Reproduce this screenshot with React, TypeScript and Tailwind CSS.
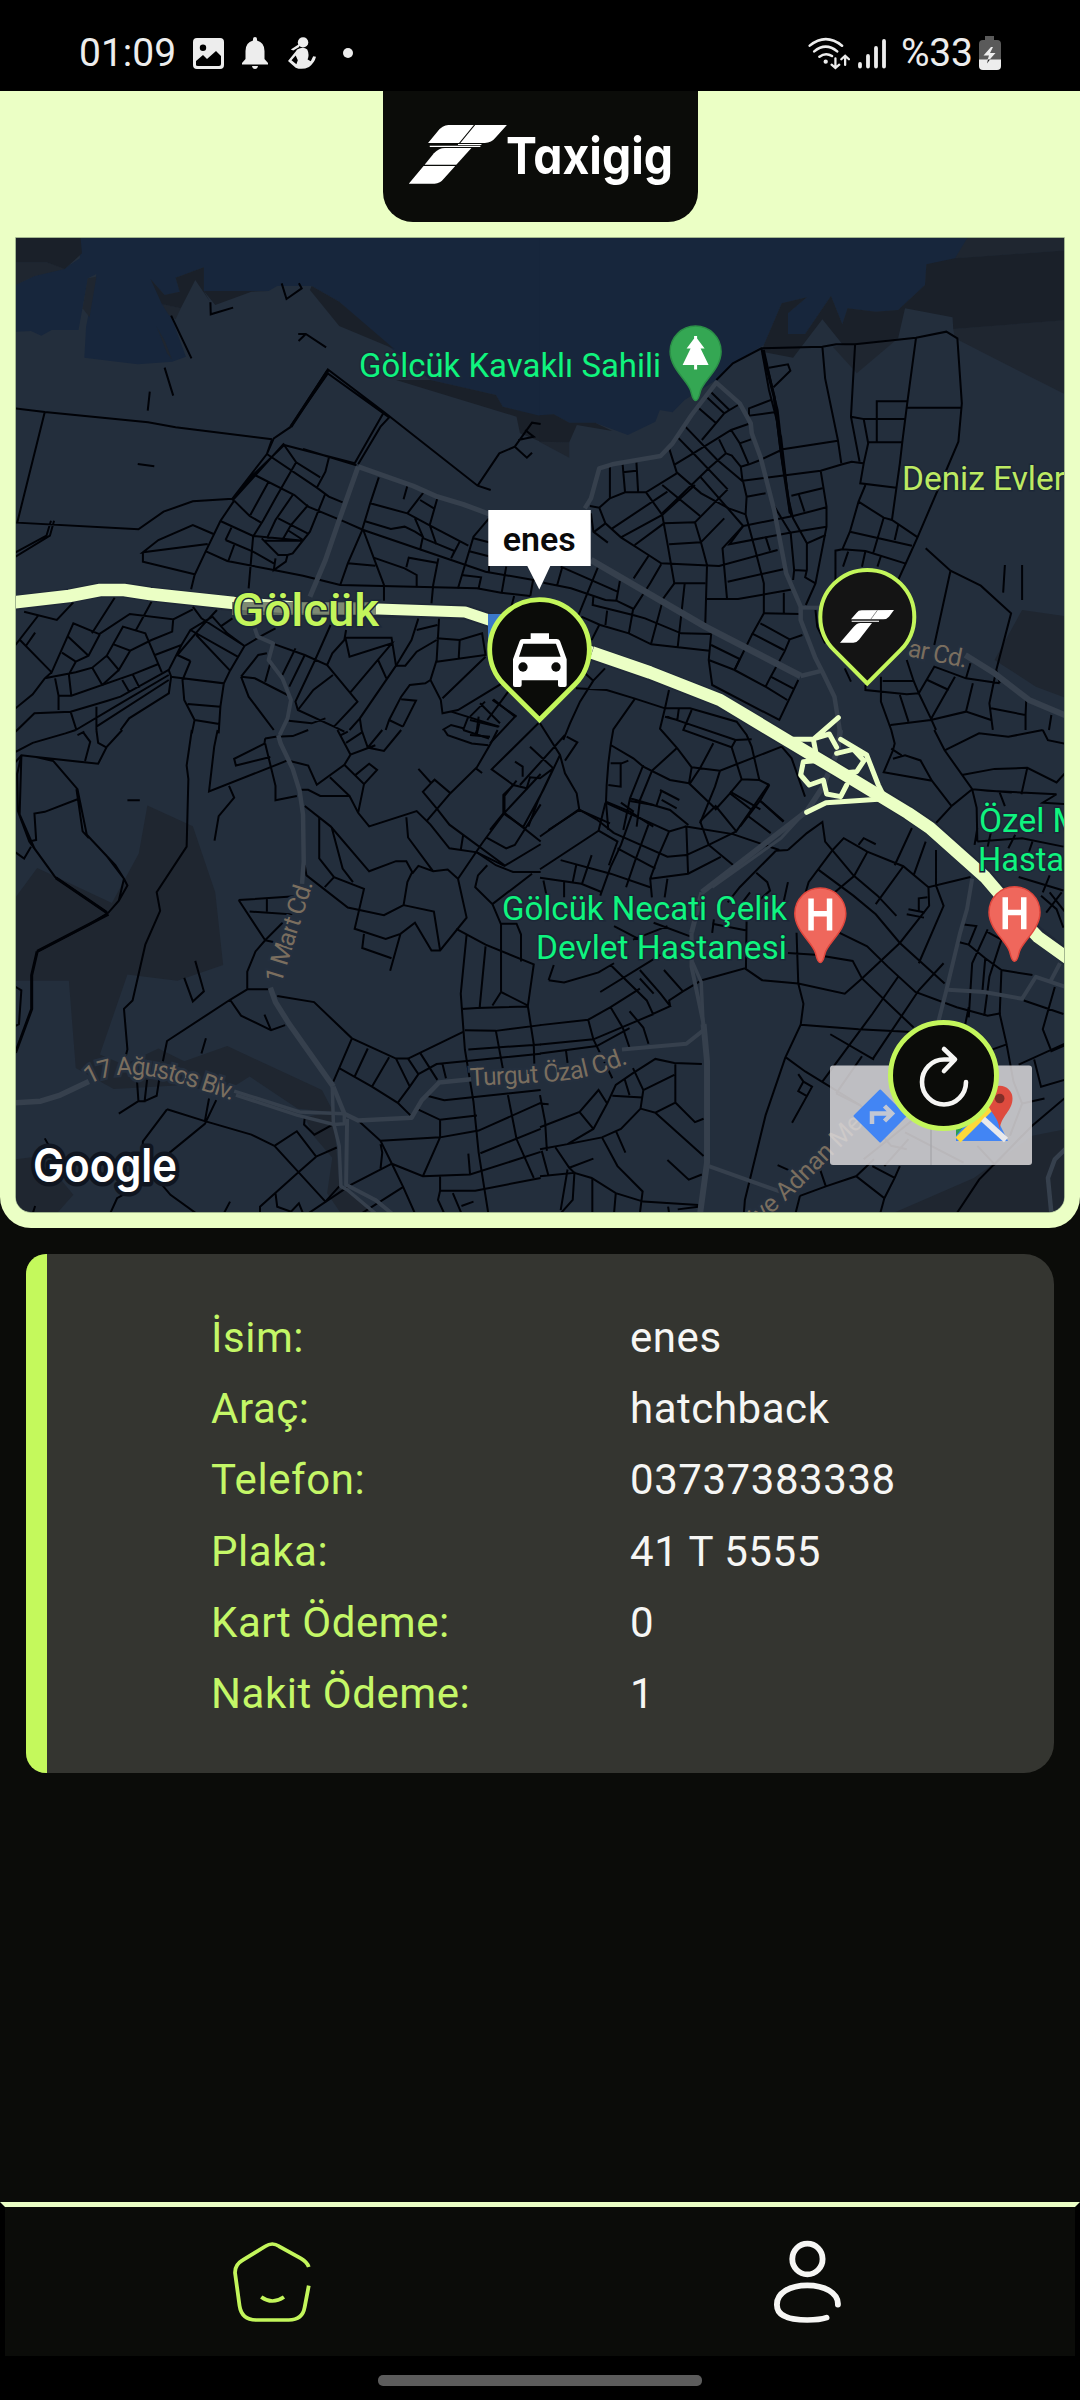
import React from "react";

type Box = "nw" | "ne" | "sw" | "se" | "mid";

// Map tiles: each group of roads is stored in its own tile space.
const TILE: Record<Box, string> = {
  nw: "translate(0 230) scale(0.34436 0.33333)",
  ne: "translate(540 230) scale(0.34436 0.33333)",
  sw: "translate(0 730) scale(0.34436 0.33806)",
  se: "translate(540 730) scale(0.34436 0.33806)",
  mid: "translate(470 490) scale(0.33333)",
};

const WATER: [Box, string][] = [
  ["nw", "M232 0L1570 0L1570 560L1460 530L1440 495L1250 450L1130 350L985 215L905 168L805 168L780 183L592 183L592 112L510 143L522 185L478 195L437 147L497 260L540 380L500 395L400 403L245 383L250 290L280 132L255 145L228 300L150 300L120 317L90 303L45 305L45 165L100 138L188 115L232 85Z"],
  ["ne", "M-2 0L1262 0L1205 90L1122 103L1118 165L1040 240L975 245L893 235L878 283L845 198L770 312L720 312L720 250L775 202L702 220L650 345L560 400L512 450L420 510L385 547L348 540L335 575L255 615L160 578L85 578L40 553L-2 558Z"],
];

const DARK: [Box, string][] = [
  ["nw", "M0 0L232 0L238 70L188 117L135 97L45 97L0 97Z"],
  ["nw", "M437 147L478 195L522 185L510 143L592 112L592 183L610 215L567 150L525 235L470 222Z"],
  ["nw", "M592 183L780 183L730 185L625 225Z"],
  ["nw", "M905 168L985 215L1145 357L985 288L900 180Z"],
  ["nw", "M1250 450L1440 495L1460 530L1570 558L1570 635L1510 610L1500 560L1150 450Z"],
  ["ne", "M1205 85L1570 58L1570 267L1200 297L1198 262L1060 235L1040 325L915 343L880 345L820 268L735 383L645 365L650 345L702 220L775 202L720 250L720 312L770 312L845 198L878 283L893 235L975 245L1040 240L1118 165L1122 103Z"],
  ["ne", "M-2 635L85 637L107 585L210 603L160 578L85 578L40 553L-2 556Z"],
];

const PARK: [Box, string][] = [
  ["nw", "M45 97L135 97L188 117L100 138L45 165Z"],
  ["nw", "M255 145L280 140L260 262L240 235Z"],
  ["nw", "M455 290L480 335L500 390L485 370Z"],
  ["nw", "M470 222L525 235L510 268L490 255Z"],
  ["ne", "M1255 0L1570 0L1570 58L1205 85Z"],
  ["ne", "M1200 297L1570 267L1570 517L1205 325Z"],
  ["ne", "M1400 1140L1570 1165L1570 1420L1440 1370L1320 1290Z"],
  ["ne", "M850 350L1040 325L920 430Z"],
  ["ne", "M-2 635L85 637L85 683Z"],
  ["sw", "M45 495L108 408L325 512L403 365L428 223L560 285L625 480L648 695L515 742L370 723L290 960L360 990L460 942L535 980L660 935L935 1065L968 1130L865 1120L725 1025L640 1080L540 1050L330 1062L220 1000L200 742L45 742Z"],
  ["sw", "M885 1145L968 1130L985 1340L1020 1370L1090 1430L990 1430L950 1370L965 1265L910 1200Z"],
  ["sw", "M45 1270L120 1260L213 1375L165 1430L45 1430Z"],
  ["se", "M1030 1427L1260 1325L1430 1200L1570 1172L1570 1450L1030 1450Z"],
];

const ARTERIAL: [Box, number, string][] = [
  ["nw", 5, "M1040 710L1200 768L1270 800L1345 823L1420 852"],
  ["nw", 5, "M1040 710L985 870L945 990L900 1100"],
  ["nw", 4, "M740 1195L748 1220L793 1240L780 1290L820 1345L845 1410L835 1465L812 1515"],
  ["ne", 4.5, "M130 835L148 805L172 715L210 703L350 678L385 640L440 555L512 458L580 520L612 580L615 610L640 680L680 840L715 1030L757 1130L757 1170L800 1285L820 1325L855 1400L872 1510"],
  ["ne", 4, "M757 1133L815 1133"],
  ["ne", 6.5, "M148 990L480 1190L757 1338"],
  ["ne", 4.5, "M757 1338L820 1322"],
  ["ne", 6, "M1235 1275L1320 1330L1420 1410L1570 1475"],
  ["sw", 4.5, "M808 15L815 40L850 115L870 180L880 250L882 390L877 455"],
  ["sw", 5.5, "M785 762L800 805L840 870L968 1055"],
  ["sw", 4.5, "M968 1055L1000 1135L1040 1155L1195 1147L1225 1095L1275 1043L1368 1033"],
  ["sw", 5.5, "M45 1103L118 1098L175 1080L258 1040"],
  ["sw", 3.5, "M680 1068L870 1130L1000 1135"],
  ["sw", 3.5, "M685 1080L865 1140L970 1167L1000 1165L1000 1135"],
  ["sw", 3.5, "M965 1055L968 1160L985 1230L990 1350L1008 1360L1090 1430"],
  ["sw", 4, "M1008 1150L1005 1345L1090 1390L1138 1430"],
  ["se", 5.5, "M470 480L775 240L820 170L865 60L872 0"],
  ["se", 3, "M500 465L700 320L790 220"],
  ["se", 5, "M440 600L450 560L470 480"],
  ["se", 6, "M475 870L485 980L485 1280L465 1430"],
  ["se", 4, "M440 600L440 700L475 870"],
  ["se", 3.5, "M440 600L440 680L468 745L475 900"],
  ["se", 4, "M238 945L425 928L475 888"],
  ["se", 4, "M490 1290L710 1370"],
  ["se", 4, "M1255 440L1240 530L1220 600L1180 770L1155 870"],
  ["se", 4, "M1185 768L1290 775L1400 795L1440 730L1570 775M1480 748L1510 690"],
  ["se", 4.5, "M1570 1195L1495 1270L1475 1325L1485 1430"],
];

const STREETS: [Box, string][] = [
  ["nw", "M45 535L130 546L430 577L510 592L790 628M130 546L50 878L402 898L475 845L560 814L675 806L735 735L825 645M45 967L135 917L148 872M45 980L145 917L157 872M675 806L775 672L795 625L845 590L952 418L1115 546L1387 767L1425 780M790 628L775 672M840 595L952 430L1130 562L1105 590L1040 703M1115 546L1030 700L825 645M880 657L1035 706M1387 767L1450 670L1495 650L1545 578L1570 582M1495 650L1530 683L1545 668M1525 600L1550 620L1505 630M675 812L825 640"],
  ["nw", "M497 257L556 385M478 413L503 497M435 485L429 542M400 702L448 709M611 217L612 253L677 233M818 160L832 207L876 175L868 160M866 312L888 312L947 352M888 312L867 333"],
  ["nw", "M825 645L860 697L930 742M860 697L800 805L765 870L735 920L722 1075M955 683L945 725L920 773M775 672L920 773L955 800L995 817M740 735L855 795L895 830L1000 875L1055 900L1225 960L1410 1025L1570 1054M780 755L727 855M850 795L800 870L775 925M895 825L845 885L820 930M945 790L900 905L850 970L835 975M680 812L725 858L757 877M640 873L735 918L880 932M808 865L893 910M835 900L880 930M760 925L808 975L835 975L830 995L795 1020L800 985M765 932L875 932M600 965L660 993L795 1020L880 1037L988 1065L1385 1075L1455 1088L1540 1098M680 812L640 873L597 965L565 1035L555 1078M620 912L560 885L460 930L415 967L603 942M415 967L415 995L565 1033M672 893L655 930M680 945L663 993M655 930L735 965L795 1000"],
  ["nw", "M1100 742L1075 820L1050 905L1010 1000L988 1065M1183 767L1172 808M1230 787L1183 850M1270 805L1248 885L1267 943M1075 820L1183 850L1245 885L1360 947M1220 810L1260 835M1058 873L1135 897L1175 890L1205 905L1228 920L1220 960M1205 865L1230 925L1320 963L1310 985M1055 900L1085 983L1115 1065L1115 1112M1010 1000L1090 1007M1085 983L1175 1015L1210 1035L1210 1070M1180 1012L1187 983L1268 998M1273 985L1258 1065L1253 1120M1335 935L1310 985M1420 865L1375 920L1330 1075M1375 925L1425 938M1360 963L1425 980M1340 1035L1397 1042L1390 1075M1420 980L1420 1025M1470 1010L1457 1088M1548 1050L1540 1098M1493 1098L1480 1150"],
  ["nw", "M70 1145L165 1170L213 1117M110 1158L45 1245M58 1230L150 1327L213 1180L290 1213M102 1208L75 1248M333 1103L267 1210M440 1115L395 1200M195 1217L257 1277M287 1213L377 1152L503 1168L500 1205L440 1230L378 1262L330 1243M180 1268L220 1295L257 1277L290 1213M150 1327L130 1345L95 1393L45 1435M130 1345L220 1327L268 1313L310 1277L357 1190L422 1210L470 1327M220 1295L200 1333L207 1397M268 1313L297 1365M310 1277L345 1320L378 1262M345 1320L297 1365M503 1168L560 1138M560 1130L585 1165L710 1248M630 1140L585 1190L515 1275M617 1160L660 1210L710 1248M675 1165L640 1190M450 1275L527 1245L553 1200L617 1160M553 1200L690 1280M570 1215L668 1322M515 1275L553 1293M527 1245L490 1320L497 1340L490 1392M710 1248L668 1322L650 1360L495 1340M553 1293L530 1350L535 1410L565 1470L557 1510M650 1360L640 1430L635 1510M545 1422L640 1430M565 1470L637 1482M710 1248L755 1220L800 1195"],
  ["nw", "M160 1345L170 1397L207 1397L385 1333L460 1302M170 1397L170 1440M45 1505L100 1450L205 1445L310 1413L350 1400L490 1320M355 1350L375 1385M385 1333L405 1373M205 1445L222 1500M280 1430L280 1500M220 1500L350 1420L490 1335M280 1490L490 1350M350 1500L375 1465L490 1390M700 1340L750 1275L775 1270M700 1340L722 1400L795 1500M700 1340L740 1345L835 1395M785 1300L770 1355M858 1255L820 1335M885 1275L840 1370M790 1240L885 1275L950 1305L1038 1415L970 1490M960 1185L915 1290L858 1415L865 1440L970 1490L1000 1505M967 1335L910 1380L865 1440M1005 1200L1000 1230L965 1270L950 1305M1003 1223L1137 1223L1150 1307L1177 1307L1210 1265L1268 1230M1003 1223L1015 1280L1138 1240L1015 1390M1098 1290L1122 1345M838 1472L905 1480L945 1465"],
  ["nw", "M1215 1165L1195 1230L1150 1307L1045 1465L1050 1500M1045 1465L1015 1500M1210 1200L1270 1185M1275 1165L1268 1290L1250 1350L1280 1410L1285 1450L1330 1440L1490 1340M1268 1225L1335 1230L1400 1210L1410 1275L1268 1295M1335 1230L1332 1285M1410 1280L1285 1405M1250 1350L1235 1360L1190 1365L1165 1400L1130 1470L1120 1500M1165 1408L1208 1412L1170 1490M1130 1470L1170 1490M1310 1445L1450 1490M1360 1460L1345 1500M1390 1460L1385 1500M1430 1410L1500 1460M1490 1365L1415 1470M1285 1500L1310 1485L1345 1495"],
  ["ne", "M512 450L560 400L643 355L820 350L860 343L915 343L1092 323L1180 305L1212 325L1225 520L1215 635L1180 720L1095 925L1060 1005L1040 1050M643 355L665 480L700 620L720 800L735 865L775 940L775 1020L770 1042L800 1060M646 360L690 540L712 740L726 850M650 360L680 500L698 660L730 860M665 413L720 403L727 422L678 472M675 508L607 535L607 557L680 547M820 350L828 445L865 630L875 700M865 632L705 658L640 690L607 703M915 343L903 560L928 695M903 560L940 567L953 640L940 700L930 760L1035 773M940 567L1060 567M978 635L978 514L1065 514M953 637L1052 637M1092 323L1067 515L1052 637L1045 700L1022 870M1067 533L1225 533"],
  ["ne", "M497 487L550 540L575 525M483 500L535 550L470 630M458 532L510 578M535 550L550 540M422 590L515 690L590 755M400 622L450 675L545 778M375 655L397 727L468 790L548 835L597 853M605 582L555 600L445 670L392 703M540 670L490 715L405 800L355 850M555 600L580 640L605 700M580 640L613 628M520 628L540 670L557 677L583 710L588 752M583 710L607 703M588 752L815 722L878 703L905 695L938 700M600 800L655 790M545 778L450 877M590 755L600 800L597 853L625 960L650 1060L650 1150L615 1215L565 1320M815 722L832 830L832 890L800 1060L772 1125M730 797L820 775M752 795L768 845M832 832L735 858L590 888M678 825L728 910L738 1020L735 1050M832 890L725 908L550 943L590 888M775 940L830 915M738 1020L775 1022"],
  ["ne", "M203 708L203 805L172 833L145 828M240 703L247 787M280 697L285 787M203 805L247 787L308 787L397 730M240 727L280 722M308 787L355 855L370 940L390 1060L480 1060M172 833L190 880L235 922L315 975L352 1000L520 1008L690 960M148 850L155 905L197 938M158 905L190 880M210 895L370 785M235 922L355 855L450 765M275 945L360 880L450 877L467 935L485 1005L480 1180M375 943L467 937L535 865M355 765L465 858M465 740L590 888M590 888L530 955L543 1105M545 1055L710 1017M480 1107L575 1107L735 1078M708 1088L708 1150M650 1150L755 1152M655 920L668 962"],
  ["ne", "M315 978L272 1045M352 1003L320 1060L270 1140L258 1210M390 1060L358 1105L323 1240M420 1062L400 1250M168 1012L110 1160M232 1053L222 1110M60 1010L225 1085M65 1010L50 1065M10 1058L90 1075L190 1110L222 1112L272 1137M155 1100L153 1125L270 1155L305 1165L410 1210L497 1212L490 1290L500 1365L695 1470L750 1350M195 1142L190 1185M120 1160L175 1185L258 1210L323 1243L492 1262M172 1185L150 1230M497 1245L580 1287L565 1320L490 1290M565 1320L655 1370L670 1340L710 1265L725 1228L640 1180M615 1210L708 1260M725 1228L762 1215M670 1340L740 1378M655 1370L718 1410"],
  ["ne", "M945 765L925 815L900 905L878 958M925 815L998 863L1022 870L1097 922M998 863L968 968M1040 885L1030 930M900 905L1080 947M858 1060L858 962L878 958L945 963L1060 1000M895 965L880 1010M945 963L935 1010M990 978L980 1010M1120 955L1192 1022L1280 1067L1368 1150L1325 1320L1305 1420L1315 1500M1192 1022L1145 1245M1350 1005L1345 1088M1400 1005L1400 1110M800 1140L805 1190L828 1240M885 1315L903 1355M945 1365L945 1380L1065 1393L1100 1390L1135 1465L1150 1500M1065 1290L1085 1353L1100 1390L1145 1310L1237 1345L1335 1360M990 1340L990 1415L1020 1500M995 1353L1085 1353M1045 1395L1070 1475M1018 1485L1135 1470L1237 1445L1310 1470M1205 1340L1135 1468M1257 1360L1237 1445M1125 1350L1187 1380M1250 1300L1237 1345M1310 1435L1410 1455L1410 1500M1410 1455L1412 1410M1485 1455L1478 1500M1325 1320L1335 1360"],
  ["mid", "M318 595L410 600L495 626L585 655L660 655L800 695L830 735L845 770L868 870L898 885M405 535L370 572L330 635L300 700L280 750M345 550L370 572M495 626L430 718L422 765L415 820L410 885L408 935L415 1020M597 600L585 655L570 716L622 775L665 832L657 880L735 955M627 652L622 690L585 680M665 660L640 720L785 772L815 868L868 870M935 770L965 805L1005 920M785 772L797 750L845 748M590 680L797 750M422 765L490 805L520 830L600 870L657 880M422 820L455 820L475 812M452 820L452 890L415 885M545 843L620 775M730 760L690 835L660 880M665 832L750 842L935 770M750 842L735 890L690 1000M520 825L480 925L460 1020M545 845L510 930L500 1010M408 935L480 965L550 1010M480 925L600 960L655 1005M575 900L560 945M570 900L628 930M575 930L620 955M815 868L780 910L845 960M780 910L735 960M898 885L870 932L940 995M870 932L810 1010"],
  ["mid", "M210 700L270 795L285 850L320 910L328 960L420 1000M205 700L65 838L130 885L170 895L180 862L210 865L250 835L180 770M150 885L285 735M250 835L205 930L175 1010M270 795L220 900L160 1010M135 815L158 830L158 860M290 740L322 757L285 812M130 885L100 915L100 970L165 1015M100 970L60 1020M328 960L235 1020M70 628L135 680L60 760M30 640L90 700M0 680L45 635M0 735L60 740M30 690L20 735M0 690L85 710"],
  ["sw", "M45 65L95 38L190 10L220 0M45 95L62 75L105 80L285 100L310 50L355 0M225 15L245 5M240 5L262 35L247 92M280 0L285 38L310 52M62 75L50 130L52 240L85 330L160 435L310 540M62 78L57 250L100 350L162 437M105 80L155 92L225 175L252 310L335 400L360 440L370 460L345 505M225 205L130 242L100 247L105 325L85 330M90 345L70 380L45 362M222 175L240 300L258 320M308 370L360 440L345 505L315 540L260 575L108 655M45 760L62 770L55 870L45 875M370 208L406 208M557 0L542 105L547 145L542 345L455 480L465 535L422 635L385 800L360 825L370 945L365 965"],
  ["sw", "M632 0L622 50L607 182L835 90M665 165L680 200L635 255L623 327M770 25L768 40L680 85L685 105L785 80M770 25L800 20L850 18L895 0M770 40L800 165L800 208L862 195M835 90L895 105L920 162L1000 103L1018 73L1090 45M980 0L1018 73M990 15L1010 5M1005 38L1050 8M1050 0L1068 52L1115 62L1165 0M1068 52L1110 0M875 177L895 177L930 195L1015 195L1040 245L1072 285L1210 240L1250 280L1305 350L1385 362L1465 402L1570 338M958 140L1015 195M1000 103L1057 160L1040 245M1030 135L1072 100L1095 118L1057 160M885 225L960 285L1072 418L1150 388L1180 388L1197 420L1183 450L1172 518L1115 548L1010 525L890 430L885 400M927 258L927 380L970 435L1057 470L1030 588L1120 618L1163 603L1205 570L1253 652L1278 652L1355 555L1330 440L1300 413L1258 418L1215 402L1197 425M963 288L995 410L1025 450M970 435L943 465M1180 258L1185 318L1258 418M1172 518L1260 537L1278 652M1057 603L1052 645L1137 675M1163 603L1133 712"],
  ["sw", "M1215 115L1252 157L1228 183L1268 232L1305 280L1465 400M1252 157L1262 147L1308 187L1240 268M1308 187L1385 110L1425 40L1445 0M1290 0L1300 15L1370 40L1418 45M1345 0L1420 25M1385 0L1380 15M1380 112L1400 127M1345 310L1338 355M1330 440L1400 335L1465 245L1570 130M1465 245L1465 195L1500 150M1465 245L1570 330M1413 318L1470 350L1495 340L1570 220M1385 362L1440 400L1490 420L1570 420M1415 400L1388 430L1380 465L1430 515L1545 425M1430 515L1455 575L1455 775L1430 815M1455 573L1500 573L1513 605L1513 685M1325 588L1410 635L1550 693L1533 815L1455 775M1355 605L1338 780L1350 945L1375 1100L1390 1250L1418 1430M1410 640L1393 820M1340 825L1385 822L1533 818L1550 930L1552 1000M1350 888L1440 890L1570 873M1440 890L1460 1000M1360 945L1570 930M1185 972L1345 893"],
  ["sw", "M693 503L857 492M693 503L770 622L845 545L725 537M775 500L775 537M770 622L797 628M770 622L742 655L718 715L718 767L785 767M718 767L668 798L485 920L473 980M668 798L700 845L787 888L828 873M768 842L787 888M805 787L912 805L1022 912L1150 972L1185 972M1022 912L985 1000L968 1040M985 1000L1080 1055L1155 1103L1192 1140M1068 942L1030 1025M1130 968L1080 1055M1150 972L1190 1055L1155 1103M1185 972L1215 1018L1190 1055M1220 955L1270 1035M1215 1018L1268 988L1570 958M1285 988L1295 1030M1240 1082L1290 1095L1570 1065M1215 1123L1278 1153L1385 1140M1278 1153L1278 1205L1228 1320M1105 1215L1278 1205L1390 1185L1570 1103M1395 1252L1570 1180M1138 1283L1228 1320L1365 1315L1570 1248M1475 1080L1500 1210L1550 1325M1278 1320L1278 1363L1380 1363L1570 1325M1278 1363L1272 1390L1290 1430M1315 1370L1340 1430M1340 1408L1375 1395M1360 1253L1365 1315M1040 1155L1105 1215L1138 1283L1170 1350L1205 1430M1105 1225L1110 1250L1105 1298M1138 1283L1020 1345L895 1430M1170 1352L1050 1430"],
  ["sw", "M885 1145L883 1167L913 1197L970 1165M797 1230L862 1187L918 1262L978 1235M918 1262L865 1310L755 1410L755 1430M797 1230L945 1395L985 1350M800 1370L805 1410L845 1425L868 1400L880 1430M398 1040L402 1098L420 1098L427 1035M402 1098L345 1135M420 1098L455 1082L462 1035M485 1122L595 1157L730 1197L797 1230M485 1122L415 1217L412 1270M595 1157L607 1090M628 1095L595 1165L475 1265M470 1345L495 1375L570 1430M375 1365L340 1385L320 1430M668 1395L650 1430M535 733L560 803L592 773L567 683M598 912L585 957M130 1208L148 1240M102 1408L95 1430"],
  ["se", "M0 315L113 235L165 265L215 305M170 298L0 412M190 215L170 298M420 285L560 308L695 355M262 210L330 222M552 182L640 235M465 270L510 225L570 300L665 160M640 210L708 270M605 255L670 305M465 270L490 340L565 403M425 285L430 425M490 340L425 370M215 305L370 375L425 370M235 215L270 240L235 340L205 405L175 490M315 280L275 390L250 465M375 300L345 370L320 440L325 495M190 215L375 300M60 385L205 425L320 465M150 370L122 455M225 350L335 410M105 400L95 450M0 437L120 455L180 480M10 445L20 495M70 450L70 495M170 298L225 330L200 400M370 440L362 495M320 440L430 425L525 375M425 285L375 300M570 300L490 340"],
  ["se", "M720 355L775 305L820 272L828 330L910 430L980 490L1035 550M685 357L720 355M685 357L580 465L545 510M628 422L660 450L668 475L640 500M610 480L580 520M505 560L500 600M600 560L598 705M500 573L600 593M720 450L705 520M770 485L780 450L850 355L882 320L950 360L1055 403L1128 465L1250 435M808 413L910 490L975 545L1045 630L1175 750M950 362L912 432L850 485M925 340L940 320L975 338M1055 403L975 515M1080 290L1030 400M1120 330L1085 430M1150 355L1150 460L1172 520L1100 690M1128 465L1130 520L1045 630L935 735L885 780L750 750L645 740L595 705L470 740M1065 545L1115 555M1100 535L1100 498L1125 495M1070 530L1118 540M870 600L950 640L1010 700L1090 775L1210 820L1300 845L1338 838M745 600L750 750L765 810L757 872L712 970L655 1140L595 1390L592 1430M720 660L800 665L908 683L935 735L1085 880M757 872L925 885L1080 893M1040 730L965 840L820 1040M1172 690L1100 770L965 975M843 900L970 975M712 967L770 1010L930 1110M935 965L860 1075M750 1018L765 1040L750 1068L775 1083L790 1055L765 1040M775 1083L732 1162"],
  ["se", "M1020 0L1030 40L1025 60L998 125L1138 150L1195 225L1255 175L1370 185M1025 85L1060 75L1105 90L1138 150M1020 55L1050 75M1145 0L1175 60L1255 175L1300 180L1500 190M1195 225L1150 275M1175 60L1275 10L1360 20L1460 0M1225 133L1320 115L1415 112L1500 155L1540 110M1415 112L1398 190M1500 190L1460 215L1570 222M1255 175L1268 230L1270 330M1335 185L1350 225M1460 0L1475 30L1570 50M1262 340L1270 290M1300 345L1310 300M1360 350L1380 310M1430 330L1420 360M1270 330L1400 320L1520 345M1390 435L1520 475M1480 430L1460 480M1455 490L1500 530L1520 585M1515 480L1470 540M1480 480L1530 545"],
  ["se", "M1230 575L1267 580L1245 635L1218 628M1295 595L1340 620M1245 635L1293 675L1340 710L1430 725M1300 590L1255 690L1245 850M1293 675L1285 770M1340 620L1305 730L1290 845M1340 710L1335 840L1355 930L1300 950M1245 820L1235 870M1405 800L1520 840M1495 760L1460 885L1485 950L1530 930M1435 975L1455 1055L1540 1030M1355 930L1375 1040L1400 1105L1465 1090M1390 990L1530 925M1540 1075L1430 1170L1275 1330L1210 1430M1400 1105L1365 1200M690 1287L740 1310M810 1290L830 1350M755 1378L830 1350L918 1320L1000 1385L988 1430M755 1378L742 1430M918 1320L970 1270M1045 1290L1030 1325L1000 1385M965 1290L1030 1325M860 1075L930 1110L1000 1180M940 1270L1050 1180L1160 1090M985 1190L1020 1230L1065 1240M1060 1190L1230 1280M1070 1210L1000 1290M1270 1230L1320 1285L1400 1200"],
  ["se", "M0 873L140 857L205 820L290 765M140 857L155 915M0 930L155 915L330 840M0 957L165 935L260 882M205 820L240 880L260 940M260 832L300 880L315 928M205 695L310 800L328 840L378 817L350 780L290 710M378 817L375 800L415 773L470 740M175 775L350 665M25 740L70 747L170 717L215 690M25 740L40 695M290 735L330 780M360 710L415 773M270 620L370 580M215 580L290 620M330 570L440 612M75 945L80 985M155 915L210 1030M0 1175L115 1130L170 1065L195 1105L155 1180L80 1225M115 1130L155 1180M195 1105L220 1050L270 1015L335 973L390 985L470 988M245 1030L260 1080M210 1082L297 1087M270 1000L300 1065L292 1120L335 1132L393 1102L393 988M300 1065L390 1020M292 1120L235 1180L180 1205L80 1225L0 1240M335 1132L475 1260M393 1102L450 1160L475 1150M220 1185L248 1250M180 1205L225 1290L298 1365L290 1430M45 1235L85 1295L100 1310L150 1325L220 1370L300 1395L460 1405M85 1295L155 1268M0 1320L100 1310L95 1390L60 1430M80 1300L60 1420M152 1325L152 1430M220 1370L215 1430M370 1272L432 1330L470 1315M5 1245L25 1320M0 1105L25 1107M0 1080L15 1160L20 1245M372 1410L375 1430M400 1418L460 1410"],
];

const THICK: [Box, string][] = [
  ["sw", "M108 655L92 725L92 825L45 955M162 437L310 540M108 655L315 545"],
  ["ne", "M648 370L680 500L705 700L727 850"],
  ["nw", "M845 590L952 422"],
];

const RAMPS =
  "M970 748L1030 748L1105 683M1030 748L1040 800M1035 745L1078 732L1100 772M1112 748L1190 795L1225 885L1240 915M1100 790L1150 778L1182 812L1160 845L1125 848M1035 812L1000 815L992 855L1018 885L1060 870L1070 912L1112 920L1130 885M1010 967L1068 938L1225 928";

function Areas({ list, fill }: { list: [Box, string][]; fill: string }) {
  return (
    <>
      {list.map(([t, d], i) => (
        <path key={i} d={d} transform={TILE[t]} fill={fill} />
      ))}
    </>
  );
}

function Lines({ list, color, width }: { list: [Box, string][]; color: string; width: number }) {
  return (
    <>
      {list.map(([t, d], i) => (
        <path key={i} d={d} transform={TILE[t]} fill="none" stroke={color} strokeWidth={width} vectorEffect="non-scaling-stroke" />
      ))}
    </>
  );
}

function Drop({ x, y, fill, edge, children }: { x: number; y: number; fill: string; edge: string; children?: React.ReactNode }) {
  return (
    <g transform={`translate(${x} ${y})`}>
      <path
        d="M0 49C-3 49 -3.5 44 -5 39C-8 29 -25.5 17 -25.5 0A25.5 25.5 0 1 1 25.5 0C25.5 17 8 29 5 39C3.500 44 3 49 0 49Z"
        fill={fill}
        stroke={edge}
        strokeWidth="1.5"
      />
      {children}
    </g>
  );
}

const H = "M-12 -15H-6.500V-2.500H6.500V-15H12V17H6.500V3H-6.500V17H-12Z";

function MapLabel(p: { x: number; y: number; w?: number; children: string; size?: number; color?: string; weight?: number; end?: boolean }) {
  return (
    <text
      x={p.x}
      y={p.y}
      textLength={p.w}
      lengthAdjust="spacingAndGlyphs"
      fontSize={p.size ?? 33.5}
      fontWeight={p.weight ?? 400}
      fill={p.color ?? "#0ff47f"}
      textAnchor={p.end ? "end" : "start"}
      stroke="#1c2737"
      strokeWidth="3"
      paintOrder="stroke"
    >
      {p.children}
    </text>
  );
}

function StreetName({ id, d, w, children }: { id: string; d: string; w: number; children: string }) {
  return (
    <>
      <path id={id} d={d} fill="none" />
      <text fontSize="25" fill="#7a6e5f" stroke="#242f3e" strokeWidth="5" paintOrder="stroke">
        <textPath href={`#${id}`} textLength={w}>
          {children}
        </textPath>
      </text>
    </>
  );
}

function CityMap() {
  return (
    <svg className="block h-full w-full" viewBox="16 238 1048 974" preserveAspectRatio="none" fontFamily="Roboto, sans-serif">
      <rect x="0" y="230" width="1080" height="1000" fill="#232e3c" />
      <Areas list={WATER} fill="#17263c" />
      <Areas list={PARK} fill="#1f2630" />
      <Areas list={DARK} fill="#1a2029" />
      <Lines list={STREETS} color="#000207" width={2} />
      <Lines list={THICK} color="#000207" width={3} />
      {ARTERIAL.map(([t, w, d], i) => (
        <path key={i} d={d} transform={TILE[t]} fill="none" stroke="#36404d" strokeWidth={w} strokeLinejoin="round" vectorEffect="non-scaling-stroke" />
      ))}
      <g fill="none" stroke="#ebffc5" strokeLinejoin="round">
        <g stroke="#1c2533" opacity="0.6">
          <path d="M0 605L69 596L100 590L124 590L150 594L234 604L330 609L465 612L489 620L592 653L650 673L720 700L790 742L837 770L880 795L930 827L985 876L1030 928L1080 968" strokeWidth="15" />
        </g>
        <path d="M0 604L69 596L100 590L124 590L150 594L234 603L300 608" strokeWidth="12.500" />
        <path d="M300 608L378 609L465 612L492 621L540 635L592 652" strokeWidth="11" />
        <path d="M592 652.500L650 672.500L720 700L790 742L837 770L880 796L908 813L930 828L985 877L1020 918L1038 937L1080 967" strokeWidth="12.500" />
        <path d={RAMPS} transform={TILE.mid} strokeWidth="5" strokeLinecap="round" vectorEffect="non-scaling-stroke" />
      </g>
      <rect x="232" y="602" width="144" height="13" fill="#6b7664" opacity="0.85" />

      <MapLabel x={232} y={625.5} w={147} size={47} weight={500} color="#c3f65b">Gölcük</MapLabel>
      <MapLabel x={359} y={377} w={302}>Gölcük Kavaklı Sahili</MapLabel>
      <MapLabel x={902} y={490} w={163} color="#bdea62">Deniz Evler</MapLabel>
      <MapLabel x={979} y={832}>Özel M</MapLabel>
      <MapLabel x={978} y={871} w={86}>Hasta</MapLabel>
      <MapLabel x={787} y={919.5} w={285} end>Gölcük Necati Çelik</MapLabel>
      <MapLabel x={787} y={958.5} w={251} end>Devlet Hastanesi</MapLabel>

      <StreetName id="st1" d="M89 1085Q120 1065 178 1083Q210 1092 250 1107" w={149}>17 Ağustos Blv.</StreetName>
      <StreetName id="st2" d="M470 1086Q530 1083 560 1081Q600 1077 645 1056" w={161}>Turgut Özal Cd.</StreetName>
      <StreetName id="st3" d="M281 984Q298 930 321 858" w={106}>1 Mart Cd.</StreetName>
      <StreetName id="st4" d="M907 656L982 671" w={60}>ar Cd.</StreetName>
      <StreetName id="st5" d="M758 1226L800 1188L900 1088" w={147}>iye Adnan Me</StreetName>

      <Drop x={695.6} y={351.5} fill="#34a753" edge="#2b8f47">
        <path d="M-1.5 -15.500H1.5V-13L9 -3H5L13 13.500H1.5V18H-1.5V13.500H-13L-5 -3H-9L-1.5 -13Z" fill="#fff" />
      </Drop>
      <Drop x={820.3} y={913.5} fill="#ef675c" edge="#e0473d">
        <path d={H} fill="#fff" />
      </Drop>
      <Drop x={1014.5} y={912.3} fill="#ef675c" edge="#e0473d">
        <path d={H} fill="#fff" />
      </Drop>

      <rect x="488" y="614" width="16" height="26" fill="#3b78c8" />
      <g transform="translate(539.5 649.300)">
        <path d="M0 70.500L-35.500 35A49.800 49.800 0 1 1 35.500 35Z" fill="#0b0c09" stroke="#c3f65b" strokeWidth="4.800" />
      </g>
      <g transform={TILE.mid}>
        <path
          d="M182 430H237V447H260Q267 447 270 453L290 508V585Q290 591 284 591H270Q264 591 264 585V571H155V585Q155 591 149 591H135Q129 591 129 585V508L149 453Q151 447 158 447H182ZM160 461L147 500H272L258 461Z"
          fill="#fff"
          fillRule="evenodd"
        />
        <circle cx="159" cy="531" r="14" fill="#0b0c09" />
        <circle cx="258" cy="531" r="14" fill="#0b0c09" />
      </g>
      <g transform="translate(867.300 617)">
        <path d="M0 66.500L-33.200 33.200A47 47 0 1 1 33.200 33.200Z" fill="#141414" stroke="#c3f65b" strokeWidth="4" />
      </g>
      <g transform={TILE.mid} fill="#fff">
        <path d="M1143 388L1160 368Q1165 361 1175 361L1272 360L1257 380Q1250 388 1240 388Z" />
        <path d="M1222 361L1203 387" stroke="#141414" strokeWidth="1.500" />
        <path d="M1145 392H1227V396H1145Z" opacity="0.8" />
        <path d="M1110 458L1150 412Q1160 399 1172 399H1206L1167 449Q1160 458 1150 458Z" />
      </g>
      <path d="M488.300 510H590.700V566H550.300L539.300 589.500L527.300 566H488.300Z" fill="#fff" />
      <text x="502.800" y="550.700" fontSize="33" fontWeight="600" fill="#0a0a0a" textLength="73" lengthAdjust="spacingAndGlyphs">
        enes
      </text>

      <text
        x="33"
        y="1182"
        fontFamily="Inter, sans-serif"
        fontSize="47"
        fontWeight="600"
        fill="#fff"
        stroke="#0f1520"
        strokeWidth="9"
        strokeLinejoin="round"
        paintOrder="stroke"
        textLength="144"
        lengthAdjust="spacingAndGlyphs"
      >
        Google
      </text>

      <g>
        <rect x="830" y="1065.500" width="202" height="99.500" rx="3" fill="#dcdadd" opacity="0.840" />
        <path d="M931 1066V1165" stroke="#a9a9ad" strokeWidth="1.500" />
        <path d="M880.200 1090.500L905.500 1116L880.200 1141.500L854.500 1116Z" fill="#4285f4" stroke="#4285f4" strokeWidth="2" strokeLinejoin="round" />
        <path d="M872 1124V1113.500H889M884.500 1106L892 1113.500L884.500 1121" fill="none" stroke="#c2c7d3" strokeWidth="4.500" />
        <path d="M956 1141V1120L990 1105L1008 1141Z" fill="#4285f4" />
        <path d="M956 1136V1112L975 1112Z" fill="#2a9e50" />
        <path d="M958 1140L992 1106" stroke="#fdd93a" strokeWidth="7" />
        <path d="M983 1119L1006 1140" stroke="#e9e9ec" strokeWidth="6" />
        <path d="M999.700 1129C998 1115 987 1111 987 1098.500A12.700 12.700 0 0 1 1012.500 1098.500C1012.500 1111 1001.500 1115 999.700 1129Z" fill="#de4b3e" />
        <circle cx="999.700" cy="1098.500" r="4.800" fill="#812e28" />
      </g>
    </svg>
  );
}

function Logo() {
  return (
    <svg className="block h-[131px] w-[315px]" viewBox="383 91 315 131">
      <g transform="scale(0.34436 0.33333)" fill="#fff">
        <path d="M1243 429L1270 395Q1285 375 1302 375H1376L1333 429Z" />
        <path d="M1380 375H1472L1440 412Q1427 429 1408 429H1337Z" />
        <path d="M1330 432H1400L1396 435H1330ZM1248 437.500H1395V441H1248Z" />
        <path d="M1233 494L1260 460Q1275 444 1292 444H1369L1325 494Z" />
        <path d="M1230 498H1322L1290 535Q1278 551 1262 551H1187Z" />
      </g>
      <text
        x="506"
        y="173.700"
        className="[font-feature-settings:'cv11','ss01']"
        fontFamily="Inter, sans-serif"
        fontSize="51"
        fontWeight="700"
        fill="#fff"
        textLength="167"
        lengthAdjust="spacingAndGlyphs"
      >
        Taxigig
      </text>
    </svg>
  );
}

function StatusBar() {
  return (
    <header className="flex h-[91px] items-center justify-between bg-black pl-[79px] pr-[79px] pt-[15px] text-[#ededed]">
      <div className="flex items-center">
        <span className="w-[114px] text-[39px] leading-none">01:09</span>
        <svg className="h-[31px] w-[31px]" viewBox="0 0 31 31">
          <path fillRule="evenodd" fill="currentColor" d="M4 0H27A4 4 0 0 1 31 4V27A4 4 0 0 1 27 31H4A4 4 0 0 1 0 27V4A4 4 0 0 1 4 0ZM3 23V27Q3 28 5 28H26Q28 28 28 26V18L23 13L14 21L10 17ZM10 6.500A3.200 3.200 0 1 0 10 12.900A3.200 3.200 0 1 0 10 6.500Z" />
        </svg>
        <svg className="ml-[18px] h-[32px] w-[26px]" viewBox="0 0 26 32" fill="currentColor">
          <path d="M11 2Q11 0 13 0Q15 0 15 2V3.500Q22.500 5.500 22.500 14V22L26 26V27.500H0V26L3.500 22V14Q3.500 5.500 11 3.500ZM10 29H16Q15.500 32 13 32Q10.500 32 10 29Z" />
        </svg>
        <svg className="ml-[20px] h-[32px] w-[28px]" viewBox="840 113 80 95" preserveAspectRatio="none" fill="currentColor">
          <circle cx="883" cy="129" r="15" />
          <path d="M872 134L848 150L855 153L872 143Z" />
          <path d="M866 150Q884 140 895 150Q902 165 896 180L905 185L912 170L920 172Q916 190 900 202Q880 212 862 204L840 184L862 156ZM862 168L850 182L864 194L868 182Z" fillRule="evenodd" />
        </svg>
        <span className="ml-[27px] size-[10px] rounded-full bg-[#ededed]" />
      </div>
      <div className="flex items-center">
        <svg className="h-[33px] w-[42px]" viewBox="776 109 121 99" preserveAspectRatio="none" fill="none" stroke="currentColor" strokeWidth="7.500" strokeLinecap="round">
          <path d="M781 135Q827 96 874 135M794 152Q827 124 860 152M809 168Q827 154 845 166" />
          <circle cx="827" cy="183" r="2.500" fill="currentColor" />
          <path d="M855 173V200M844 192L855 202L866 192M883 193V166M872 176L883 165L894 176" strokeWidth="6.500" />
        </svg>
        <svg className="ml-[8px] h-[31px] w-[28px]" viewBox="0 0 28 31" stroke="currentColor" strokeWidth="3.800" strokeLinecap="round">
          <path d="M2 26V28.500M10 18V28.500M18 10V28.500M26 3V28.500" />
        </svg>
        <span className="ml-[15px] w-[78px] text-[39px] leading-none tracking-[-0.3px]">%33</span>
        <svg className="h-[34px] w-[22px]" viewBox="0 0 22 34">
          <path d="M6 0H15V4H18Q22 4 22 8V24H0V8Q0 4 4 4H6Z" fill="#5a5a5a" />
          <path d="M0 23.500H22V30Q22 34 18 34H4Q0 34 0 30Z" fill="#ededed" />
          <path d="M12 11L4.500 19.500H10L7.500 27L16.500 17H11L14 11Z" fill="#ededed" />
          <path d="M9 23.500H11L8 27.500Z" fill="#222" />
        </svg>
      </div>
    </header>
  );
}

const DETAILS: [string, string][] = [
  ["İsim:", "enes"],
  ["Araç:", "hatchback"],
  ["Telefon:", "03737383338"],
  ["Plaka:", "41 T 5555"],
  ["Kart Ödeme:", "0"],
  ["Nakit Ödeme:", "1"],
];

export default function App() {
  return (
    <div className="flex h-[2400px] w-[1080px] flex-col overflow-hidden bg-[#0b0c09] font-[Roboto,sans-serif]">
      <StatusBar />
      <section className="flex h-[1137px] shrink-0 flex-col items-center rounded-b-[31px] bg-[#ebffc5]">
        <div className="h-[131px] w-[315px] overflow-hidden rounded-b-[30px] bg-[#0b0c09]">
          <Logo />
        </div>
        <div className="relative mt-[15px] h-[976px] w-[1050px] overflow-hidden rounded-b-[16px] border border-[#a3b78f]">
          <CityMap />
          <button className="absolute left-[872px] top-[782px] flex size-[111px] items-center justify-center rounded-full border-[5px] border-[#c3f65b] bg-[#0b0c09]">
            <svg className="h-[64px] w-[54px]" viewBox="0 0 54 64" fill="none" stroke="#f6f6f4" strokeWidth="4.600" strokeLinecap="round" strokeLinejoin="round">
              <path d="M49 38A22 22.500 0 1 1 27 15.500H37M27 5L38 15.500L27 27" />
            </svg>
          </button>
        </div>
      </section>
      <section className="mx-[26px] mt-[26px] flex h-[519px] shrink-0 overflow-hidden rounded-l-[20px] rounded-r-[30px] bg-[#343530]">
        <div className="w-[21px] bg-[#c4f95c]" />
        <dl className="flex flex-col pl-[164px] pt-[48px] text-[42px] leading-[71.200px] tracking-[0.55px]">
          {DETAILS.map(([label, value]) => (
            <div key={label} className="flex">
              <dt className="w-[419px] text-[#c4f767]">{label}</dt>
              <dd className="text-[#f6f6f4]">{value}</dd>
            </div>
          ))}
        </dl>
      </section>
      <nav className="mt-auto flex h-[159px] shrink-0 border-[5px] border-black border-t-[#ebffc5]">
        <a className="flex flex-1 items-center justify-center">
          <svg className="h-[84px] w-[80px]" viewBox="678 178 232.300 252" preserveAspectRatio="none" fill="none" stroke="#c3f65b" strokeWidth="11">
            <path d="M898 259Q893 244 875 233L812 197Q792 183 772 197L705 239Q683 252 684 277L697 375Q703 417 745 418H840Q880 418 886 380L898 315" />
            <path d="M760 349Q792 373 826 349" />
          </svg>
        </a>
        <a className="flex flex-1 items-center justify-center">
          <svg className="h-[88px] w-[70px]" viewBox="675.500 173 203.300 264" preserveAspectRatio="none" fill="none" stroke="#f6f6f4" strokeWidth="17" strokeLinecap="round">
            <ellipse cx="775.500" cy="236" rx="44" ry="46" />
            <path d="M864 373C866 338 825 315 775 315C725 315 685 338 687 375C687 410 730 419 775 419C800 419 820 416 831 412" />
          </svg>
        </a>
      </nav>
      <footer className="flex h-[39px] shrink-0 items-start justify-center bg-black pt-[14px]">
        <div className="h-[11px] w-[324px] rounded-[5px] bg-[#5c5c5c]" />
      </footer>
    </div>
  );
}
